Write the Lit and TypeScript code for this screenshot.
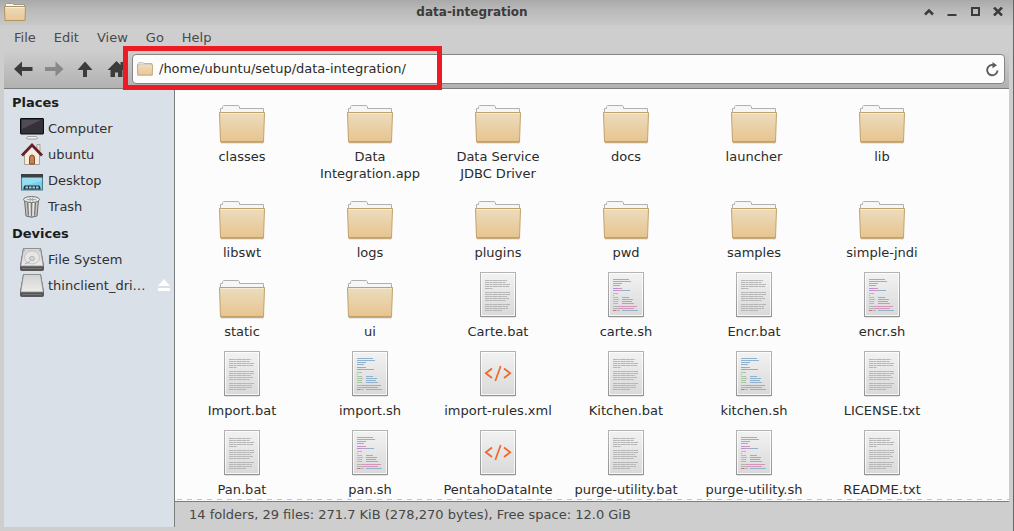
import { LitElement, html, svg, css, TemplateResult } from "lit";
import { customElement, property, state } from "lit/decorators.js";

type Kind = "folder" | "text" | "script" | "xml";

const FILES: [string, Kind][] = [
  ["classes", "folder"],
  ["Data Integration.app", "folder"],
  ["Data Service JDBC Driver", "folder"],
  ["docs", "folder"],
  ["launcher", "folder"],
  ["lib", "folder"],
  ["libswt", "folder"],
  ["logs", "folder"],
  ["plugins", "folder"],
  ["pwd", "folder"],
  ["samples", "folder"],
  ["simple-jndi", "folder"],
  ["static", "folder"],
  ["ui", "folder"],
  ["Carte.bat", "text"],
  ["carte.sh", "script"],
  ["Encr.bat", "text"],
  ["encr.sh", "script"],
  ["Import.bat", "text"],
  ["import.sh", "script"],
  ["import-rules.xml", "xml"],
  ["Kitchen.bat", "text"],
  ["kitchen.sh", "script"],
  ["LICENSE.txt", "text"],
  ["Pan.bat", "text"],
  ["pan.sh", "script"],
  ["PentahoDataInte", "xml"],
  ["purge-utility.bat", "text"],
  ["purge-utility.sh", "script"],
  ["README.txt", "text"],
];

/* y, width of each grey line on a text page */
const TEXT_LINES = [
  [8, 22], [10, 21], [12, 25], [14, 24], [16, 8],
  [20, 25], [22, 25], [24, 22], [26, 24], [28, 21],
  [32, 25], [34, 23], [36, 23], [38, 17],
];

/* x, y, width, colour of each run on a script page */
const BLUE = "#8fb3cb";
const PINK = "#d495b8";
const GREY = "#b4b4b4";
const GREEN = "#9cd094";
const PURPLE = "#b78fd6";
const CODE_RUNS: [number, number, number, string][] = [
  [5, 7, 16, BLUE], [5, 9, 18, BLUE], [5, 11, 9, BLUE], [5, 13, 7, BLUE],
  [5, 16, 4, PURPLE], [9, 16, 5, PINK],
  [5, 18, 4, PURPLE], [9, 18, 5, PINK], [14, 18, 8, BLUE],
  [5, 21, 3, GREEN], [8, 21, 2, GREY],
  [5, 23, 1, GREY],
  [5, 25, 3, GREEN], [8, 25, 2, GREY], [14, 25, 7, BLUE],
  [5, 27, 4, GREEN], [9, 27, 2, GREY], [14, 27, 11, BLUE],
  [5, 29, 3, GREEN], [8, 29, 2, GREY], [14, 29, 10, BLUE],
  [5, 31, 3, GREEN], [8, 31, 2, GREY], [14, 31, 12, BLUE],
  [5, 34, 5, GREY], [10, 34, 14, PINK], [24, 34, 5, PINK],
  [5, 36, 6, GREY], [11, 36, 15, PINK],
  [5, 38, 3, "#dd6a72"], [8, 38, 4, GREY], [14, 38, 16, BLUE],
];

const folderIcon = () => html`<svg class="icon" viewBox="0 0 48 48" aria-hidden="true">
  <defs>
    <linearGradient id="f" x1="0" y1="0" x2="0" y2="1">
      <stop offset="0" stop-color="#ecdcbd" /><stop offset="1" stop-color="#e7c48f" />
    </linearGradient>
  </defs>
  <rect x="3" y="46" width="43" height="2" fill="#000" opacity=".08" />
  <path d="M2.5 18V12.5H4.5V10.5L5.5 9.5H20.5L21.5 10.5V12.5H45.5V18Z" fill="#f6f6f6" stroke="#b0b0b0" />
  <path d="M1.5 16.5H46.5L45.5 46H2.5Z" fill="url(#f)" stroke="#c2a26c" />
  <path d="M2.5 17.5H45.5" stroke="#f5ead3" />
  <path d="M3 46H45" stroke="#b58f55" />
</svg>`;

const smallFolder = (w: number, h: number) => html`<svg width=${w} height=${h} viewBox="0 0 22 18" aria-hidden="true">
  <defs>
    <linearGradient id="s" x1="0" y1="0" x2="0" y2="1">
      <stop offset="0" stop-color="#ecdbbb" /><stop offset="1" stop-color="#e8c795" />
    </linearGradient>
  </defs>
  <path d="M1.5 5V1.5L2.5 .5H8.500L9.500 1.500H20.500V5Z" fill="#f8f8f8" stroke="#9a9a9a" />
  <path d="M.5 3.500H21.500L21 17.500H1Z" fill="url(#s)" stroke="#b3935f" />
  <path d="M1.500 4.500H20.500" stroke="#f6ecd8" />
</svg>`;

const pageIcon = (content: unknown) => html`<svg class="icon" viewBox="0 0 48 48" aria-hidden="true">
  <defs>
    <linearGradient id="p" x1="0" y1="0" x2="0" y2="1">
      <stop offset="0" stop-color="#f2f2f2" /><stop offset="1" stop-color="#d9d9d9" />
    </linearGradient>
    <linearGradient id="e" x1="0" y1="0" x2="0" y2="1">
      <stop offset="0" stop-color="#b4b4b4" /><stop offset="1" stop-color="#949494" />
    </linearGradient>
  </defs>
  <rect x="7" y="46" width="34" height="1" fill="#000" opacity=".1" />
  <rect x="6.500" y="1.500" width="35" height="44" fill="url(#p)" stroke="url(#e)" />
  <rect x="7.500" y="2.500" width="33" height="42" fill="none" stroke="#fff" opacity=".75" />
  <g transform="translate(6 1)">${content}</g>
</svg>`;

const textIcon = () =>
  pageIcon(TEXT_LINES.map(([y, w]) => svg`<path d=${`M5 ${y + 0.5}h${w}`} stroke="#b5b5b5" stroke-dasharray="4 .4 3 .4 5 .4"/>`));

const scriptIcon = () =>
  pageIcon(CODE_RUNS.map(([x, y, w, c]) => svg`<path d=${`M${x} ${y + 0.5}h${w}`} stroke=${c}/>`));

const xmlIcon = () =>
  pageIcon(svg`<g fill="none" stroke="#f0672a" stroke-width="1.700">
    <path d="M12 17.500L5.800 22.300L12 27"/><path d="M24 17.500L30.200 22.300L24 27"/><path d="M20.700 15L15.300 30"/></g>`);

const ICONS: Record<Kind, () => TemplateResult> = {
  folder: folderIcon,
  text: textIcon,
  script: scriptIcon,
  xml: xmlIcon,
};

const computerIcon = html`<svg width="24" height="24" viewBox="0 0 24 24" aria-hidden="true">
  <path d="M9 18h6v3H9z" fill="#dcdcdc" />
  <path d="M8 20.500h8l1.500 1q0 1.500-1.500 1.500H8q-1.500 0-1.500-1.500z" fill="#f4f4f4" stroke="#8b8b8b" stroke-width=".8" />
  <rect x=".5" y="2.500" width="23" height="15.500" rx=".5" fill="#35313a" stroke="#0c0b0e" />
  <path d="M2 4h19L2 13z" fill="#5a5560" opacity=".75" />
</svg>`;

const homeIcon = html`<svg width="24" height="24" viewBox="0 0 24 24" aria-hidden="true">
  <path d="M17 2.500h3V9h-3z" fill="#efe4d8" stroke="#a99582" stroke-width=".8" />
  <path d="M4.500 11L12 4l7.500 7v11.500h-15z" fill="#f7ece1" stroke="#a8978a" stroke-width=".9" />
  <path d="M9.500 22v-6.500a2.500 2.500 0 0 1 5 0V22z" fill="#c88149" stroke="#7b4520" stroke-width=".9" />
  <path d="M2 13.500L12 3l10 10.500" fill="none" stroke="#672029" stroke-width="2.800" />
</svg>`;

const desktopIcon = html`<svg width="24" height="24" viewBox="0 0 24 24" aria-hidden="true">
  <rect x="1.500" y="6.500" width="21" height="15.500" fill="#7bcfeb" stroke="#467989" />
  <path d="M2 9h20v4L2 18z" fill="#a4e1f3" opacity=".7" />
  <rect x="1" y="6" width="22" height="3.500" fill="#3d3f42" />
  <path d="M3.500 21.500V20l1-2.500h15l1 2.500v1.500z" fill="#24333a" />
  <path d="M5.500 19.500H8M9 19.500h2.500M12.500 19.500H15M16 19.500h2.500" stroke="#8edcf0" stroke-width="2" />
</svg>`;

const trashIcon = html`<svg width="24" height="24" viewBox="0 0 24 24" aria-hidden="true">
  <path d="M4.500 6h14L17 22q-5.500 2.500-11 0z" fill="#c5c5c5" stroke="#6d6d6d" />
  <path d="M7.500 8.500l1 13M11.500 9v13.500M15.500 8.500l-1 13" stroke="#777" stroke-width="1.200" />
  <path d="M9.500 9l.5 13M13.500 9l-.5 13" stroke="#f1f1f1" />
  <ellipse cx="11.500" cy="5.500" rx="8" ry="3" fill="#e4e4e4" stroke="#757575" />
  <path d="M7 5.500h9M9.500 3.500l4 4M13.500 3.500l-4 4" stroke="#9b9b9b" stroke-width=".8" />
</svg>`;

const driveIcon = (platter: boolean) => html`<svg width="24" height="24" viewBox="0 0 24 24" aria-hidden="true">
  <defs>
    <linearGradient id="d" x1="0" y1="0" x2="0" y2="1">
      <stop offset="0" stop-color="#d2d2d2" /><stop offset="1" stop-color="#ececec" />
    </linearGradient>
  </defs>
  <path d="M3.500 1.500h17l3 17v4q0 1-1 1h-21q-1 0-1-1v-4z" fill="#555" stroke="#484848" stroke-width=".8" />
  <path d="M3.500 1.500h17l2.800 17.500H.7z" fill="url(#d)" stroke="#8f8f8f" stroke-width=".8" />
  <path d="M2 21.500h20" stroke="#7d7d7d" stroke-width=".8" />
  ${platter
    ? svg`<ellipse cx="12" cy="10.500" rx="7.500" ry="6.500" fill="#e6e6e6" stroke="#bdbdbd" stroke-width=".8"/>
       <ellipse cx="12" cy="11.500" rx="2.500" ry="2" fill="#d6d6d6" stroke="#a6a6a6" stroke-width=".8"/>
       <path d="M5 17l5-2.500" stroke="#a6a6a6"/><circle cx="4.500" cy="3.500" r=".6" fill="#999"/><circle cx="19.500" cy="3.500" r=".6" fill="#999"/>`
    : ""}
</svg>`;

const ejectIcon = html`<svg width="14" height="12" viewBox="0 0 14 12" aria-hidden="true">
  <path d="M7 0l6 7H1zM1 9h12v3H1z" fill="#fff" />
</svg>`;

const GLYPHS = {
  back: svg`<path d="M0 8L8 .5V6h10.500v4H8v5.500z"/>`,
  forward: svg`<path d="M18.500 8l-8-7.500V6H0v4h10.500v5.500z"/>`,
  up: svg`<path d="M9 .5L1.500 9H7v7h4V9h5.500z"/>`,
  home: svg`<path d="M9.500 0L.5 9h3v7H8v-4.500h3V16h4.500V9h3L16 6V1h-2.500v3z"/>`,
};

@customElement("file-tile")
class FileTile extends LitElement {
  @property() name = "";
  @property() kind: Kind = "folder";

  static styles = css`
    :host { display: block; }
    .tile {
      display: flex; flex-direction: column; align-items: center; gap: 4px;
      width: 100%; padding: 0 8px 10px; border: 0; background: none;
      font: inherit; color: inherit; line-height: 17px; text-align: center;
    }
    .icon { width: 48px; height: 48px; display: block; }
  `;

  render() {
    return html`<button class="tile" type="button">${ICONS[this.kind]()}<span>${this.name}</span></button>`;
  }
}

@customElement("app-root")
class AppRoot extends LitElement {
  @state() path = "/home/ubuntu/setup/data-integration/";

  static styles = css`
    :host {
      display: flex; flex-direction: column; box-sizing: border-box; height: 100vh;
      padding: 0 4px 4px; border-right: 1px solid #666; background: #cecece;
      font: 13px/17px "DejaVu Sans", sans-serif; color: #2b2b2b; overflow: hidden;
    }
    button { margin: 0; padding: 0; border: 0; background: none; font: inherit; color: inherit; }
    svg { display: block; flex: none; }
    .titlebar {
      display: flex; align-items: center; height: 25px; flex: none; margin: 0 -4px; padding: 0 4px;
      box-sizing: border-box; padding-bottom: 2px;
      background: linear-gradient(#a9a9a9, #bababa 40%, #c8c8c8); color: #3b3b3b;
    }
    .titlebar svg { fill: none; stroke: #3b3b3b; }
    .title { flex: 1; margin: 0; font-size: 12px; font-weight: bold; line-height: 24px; text-align: center; }
    .win { display: flex; gap: 1px; }
    .win button { width: 22px; height: 23px; display: grid; place-items: center; }
    .menubar { display: flex; height: 25px; flex: none; padding-left: 1px; color: #4a4a4a; }
    .menubar button { padding: 0 9px; }
    .toolbar {
      display: flex; align-items: center; height: 38px; flex: none; padding: 0 4px 0 10px;
      background: linear-gradient(#cecece, #b1b1b1); border-bottom: 1px solid #7d7d7d;
    }
    .nav { display: flex; gap: 12px; width: 118px; flex: none; overflow: hidden; fill: #3c3c3c; }
    .nav button:disabled { fill: #888; }
    .location {
      position: relative; flex: 1; display: flex; align-items: center; gap: 6px; box-sizing: border-box;
      height: 30px; padding: 0 4px; background: #fcfcfc; border: 1px solid #858585; border-radius: 4px;
    }
    .path {
      flex: 1; min-width: 0; border: 0; outline: 0; padding: 0 0 2px; background: none; font: inherit; color: inherit;
    }
    .marker {
      position: absolute; left: -10px; top: -9px; width: 319px; height: 44px; box-sizing: border-box;
      border: 5px solid #ed1c24; pointer-events: none;
    }
    .body { flex: 1; display: flex; min-height: 0; }
    .sidebar {
      width: 170px; flex: none; background: #dae0e8; border-right: 1px solid #7d7d7d; overflow: hidden;
    }
    .sidebar h2 { margin: 0; padding: 2px 8px 0; font-size: 13px; line-height: 24px; color: #1c1c1c; }
    .places { list-style: none; margin: 0 0 1px; padding: 0; }
    .places li { display: flex; align-items: center; height: 26px; padding: 0 3px 0 16px; }
    .places a { flex: 1; display: flex; align-items: center; gap: 4px; color: #303030; text-decoration: none; }
    .content { flex: 1; min-width: 0; display: flex; flex-direction: column; }
    .files {
      flex: 1; min-height: 0; overflow: hidden; background: #fcfcfc;
      display: grid; grid-template-columns: repeat(auto-fill, 128px); align-content: start; padding: 7px 3px 0;
    }
    .more {
      height: 1px; flex: none; padding: 0 0 1px 2px; background: #fcfcfc repeating-linear-gradient(90deg, #c4c4c4 0 5px, #fcfcfc 5px 10px) 2px 0 / 100% 1px no-repeat;
      border-bottom: 1px solid #7d7d7d;
    }
    .status { height: 25px; flex: none; padding-left: 14px; line-height: 25px; color: #474747; }
  `;

  nav(label: string, glyph: unknown, disabled = false) {
    return html`<button type="button" aria-label=${label} ?disabled=${disabled}>
      <svg width="19" height="16" viewBox="0 0 19 16">${glyph}</svg></button>`;
  }

  place(label: string, icon: unknown, extra: unknown = "") {
    return html`<li><a href="#">${icon}<span>${label}</span></a>${extra}</li>`;
  }

  render() {
    return html`
      <header class="titlebar">
        ${smallFolder(22, 18)}
        <h1 class="title">data-integration</h1>
        <div class="win">
          <button type="button" aria-label="Shade"><svg width="10" height="8"><path d="M1 6.500L5 2.500l4 4" stroke-width="2.500" /></svg></button>
          <button type="button" aria-label="Minimize"><svg width="10" height="8"><path d="M.5 7H9.500" stroke-width="2" /></svg></button>
          <button type="button" aria-label="Maximize"><svg width="9" height="9"><path d="M1 1h7v7H1z" stroke-width="2" /></svg></button>
          <button type="button" aria-label="Close"><svg width="10" height="9"><path d="M1 .5l8 8M9 .5l-8 8" stroke-width="2.500" /></svg></button>
        </div>
      </header>
      <nav class="menubar">
        ${["File", "Edit", "View", "Go", "Help"].map((m) => html`<button type="button">${m}</button>`)}
      </nav>
      <div class="toolbar">
        <div class="nav">
          ${this.nav("Back", GLYPHS.back)}${this.nav("Forward", GLYPHS.forward, true)}
          ${this.nav("Up", GLYPHS.up)}${this.nav("Home", GLYPHS.home)}
        </div>
        <div class="location">
          ${smallFolder(16, 14)}
          <input class="path" type="text" aria-label="Location" .value=${this.path} />
          <button type="button" aria-label="Reload">
            <svg width="15" height="15" viewBox="0 0 15 15"><path d="M12.500 8.500A5.200 5.200 0 1 1 8.500 3" fill="none" stroke="#5a5a5a" stroke-width="1.900" /><path d="M7.500 0l4.500 3.200-4.500 3z" fill="#5a5a5a" /></svg>
          </button>
          <div class="marker"></div>
        </div>
      </div>
      <div class="body">
        <aside class="sidebar">
          <h2>Places</h2>
          <ul class="places">
            ${this.place("Computer", computerIcon)} ${this.place("ubuntu", homeIcon)}
            ${this.place("Desktop", desktopIcon)} ${this.place("Trash", trashIcon)}
          </ul>
          <h2>Devices</h2>
          <ul class="places">
            ${this.place("File System", driveIcon(true))}
            ${this.place("thinclient_dri…", driveIcon(false), html`<button type="button" aria-label="Eject">${ejectIcon}</button>`)}
          </ul>
        </aside>
        <main class="content">
          <div class="files">
            ${FILES.map(([name, kind]) => html`<file-tile .name=${name} .kind=${kind}></file-tile>`)}
          </div>
          <div class="more"></div>
          <div class="status">14 folders, 29 files: 271.7 KiB (278,270 bytes), Free space: 12.0 GiB</div>
        </main>
      </div>
    `;
  }
}
